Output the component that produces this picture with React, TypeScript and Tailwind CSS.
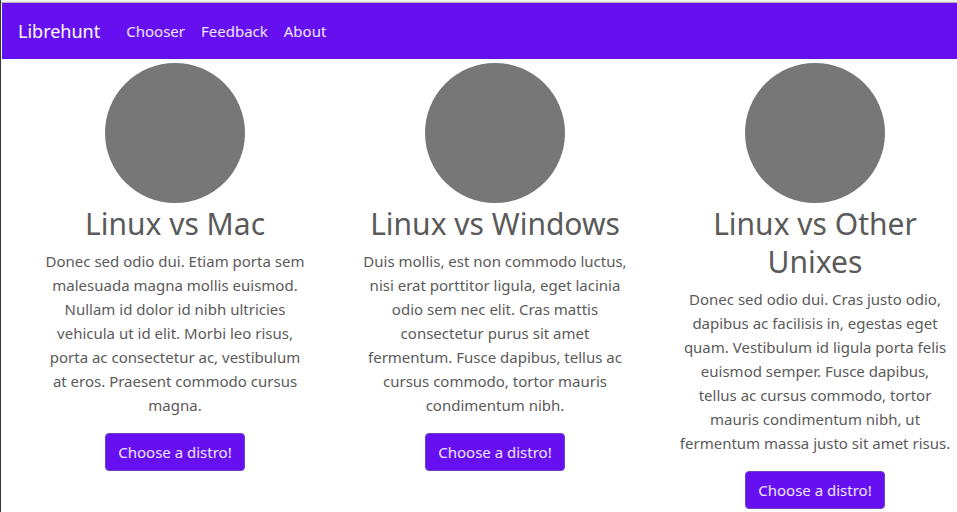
const links = ['Chooser', 'Feedback', 'About'];

const topics = [
  {
    title: 'Linux vs Mac',
    text: 'Donec sed odio dui. Etiam porta sem malesuada magna mollis euismod. Nullam id dolor id nibh ultricies vehicula ut id elit. Morbi leo risus, porta ac consectetur ac, vestibulum at\u00a0eros. Praesent commodo cursus magna.',
  },
  {
    title: 'Linux vs Windows',
    text: 'Duis mollis, est non commodo luctus, nisi erat porttitor ligula, eget lacinia odio sem nec elit. Cras mattis consectetur purus sit amet fermentum. Fusce dapibus, tellus ac cursus commodo, tortor mauris condimentum nibh.',
  },
  {
    title: 'Linux vs Other Unixes',
    text: 'Donec sed odio dui. Cras justo odio, dapibus ac facilisis in, egestas eget quam. Vestibulum id ligula porta felis euismod semper. Fusce dapibus, tellus\u00a0ac cursus commodo, tortor mauris condimentum nibh, ut fermentum massa justo sit amet risus.',
  },
];

export default function App() {
  return (
    <div className="min-h-screen overflow-hidden border-l border-[#3d3533] bg-white font-['Noto_Sans','Open_Sans',sans-serif] text-[15px] leading-6 text-[#5a5a5a]">
      <div className="h-[3px] border-b border-[#b5b1ad] bg-[#f0efee]" />
      <nav className="ml-px flex h-14 items-center bg-[#6610f2] px-4 text-white">
        <a href="#" className="mr-[18px] text-lg">Librehunt</a>
        <ul className="flex">
          {links.map((link) => (
            <li key={link}>
              <a href="#" className="block p-2 text-[#f0e7fe]">{link}</a>
            </li>
          ))}
        </ul>
      </nav>
      <main className="ml-3.5 mt-1 grid w-full min-w-[960px] grid-cols-3">
        {topics.map((topic) => (
          <section key={topic.title} className="flex flex-col items-center px-[22px] text-center">
            <div className="size-[140px] rounded-full bg-[#777]" />
            <h2 className="mb-1.5 max-w-[272px] pt-0.5 text-3xl leading-[38px]">{topic.title}</h2>
            <p className="mb-4">{topic.text}</p>
            <button type="button" className="h-[38px] w-[140px] whitespace-nowrap rounded border border-[#6f42c1] bg-[#6610f2] text-[#f0e7fe]">
              Choose a distro!
            </button>
          </section>
        ))}
      </main>
    </div>
  );
}
